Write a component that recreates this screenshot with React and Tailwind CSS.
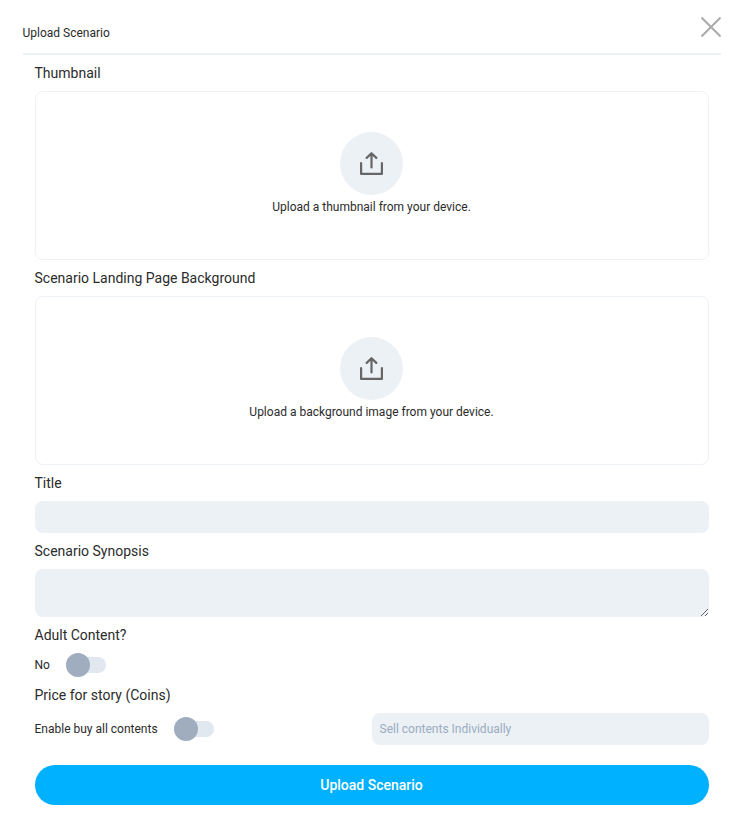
function Label({ children }) {
  return <div className="-ml-[0.5px] h-[18px] text-[14px] leading-[18px]">{children}</div>;
}

function UploadBox({ text }) {
  return (
    <div className="mt-[9px] flex h-[169px] flex-col items-center rounded-lg border border-[#edf2f7] pt-10 pr-px">
      <div className="flex h-[63px] w-[63px] items-center justify-center rounded-full bg-[#ecf1f6]">
        <svg width="23" height="23" viewBox="0 0 23 23" fill="none" stroke="#666" strokeWidth="2.2" strokeLinecap="round" strokeLinejoin="round">
          <path d="M1.1 11.2v10.7h20.8V11.2M11.5 15.5V1.6M6.7 5.9l4.8-4.7 4.8 4.7" />
        </svg>
      </div>
      <div className="mt-1 text-[12px] leading-4">{text}</div>
    </div>
  );
}

function Toggle() {
  return (
    <div className="flex h-6 w-10 items-center">
      <div className="h-4 w-10 rounded-full bg-[#e2e8f0]">
        <div className="-mt-1 h-6 w-6 rounded-full bg-[#9fadbf]" />
      </div>
    </div>
  );
}

export default function App() {
  return (
    <div className="h-[828px] w-[745px] bg-white pr-6 pl-[23px] font-['Roboto',sans-serif] text-[#2b2b2b]">
      <header className="flex h-[55px] items-start justify-between border-b-2 border-[#ebf1f6]">
        <h1 className="mt-[25px] -ml-[0.5px] text-[12px] leading-4">Upload Scenario</h1>
        <svg className="mt-[17px]" width="20" height="20" viewBox="0 0 20 20" stroke="#aaa" strokeWidth="2">
          <path d="M.5.5l19 19M19.5.5l-19 19" />
        </svg>
      </header>
      <main className="px-3 pt-[9px]">
        <Label>Thumbnail</Label>
        <UploadBox text="Upload a thumbnail from your device." />
        <div className="mt-[9px]"><Label>Scenario Landing Page Background</Label></div>
        <UploadBox text="Upload a background image from your device." />
        <div className="mt-[9px]"><Label>Title</Label></div>
        <input className="mt-[9px] block h-8 w-full rounded-lg bg-[#ecf1f6]" />
        <div className="mt-[9px]"><Label>Scenario Synopsis</Label></div>
        <textarea className="mt-[9px] block h-12 w-full resize-y rounded-lg bg-[#ecf1f6]" />
        <div className="mt-[9px]"><Label>Adult Content?</Label></div>
        <div className="mt-[9px] flex h-6 items-center gap-[16.5px] text-[12px]"><span className="-ml-[0.5px]">No</span><Toggle /></div>
        <div className="mt-[9px]"><Label>Price for story (Coins)</Label></div>
        <div className="mt-[9px] flex h-8 items-center justify-between">
          <div className="flex items-center gap-[16.5px] text-[12px]"><span className="-ml-[0.5px]">Enable buy all contents</span><Toggle /></div>
          <div className="flex h-8 w-[337px] items-center rounded-lg bg-[#ecf1f6] px-[7.5px] text-[12px] text-[#9aabc0]">Sell contents Individually</div>
        </div>
        <button className="mt-5 block h-10 w-full rounded-full bg-[#00b1ff] pr-px text-[14px] font-medium text-white">Upload Scenario</button>
      </main>
    </div>
  );
}
